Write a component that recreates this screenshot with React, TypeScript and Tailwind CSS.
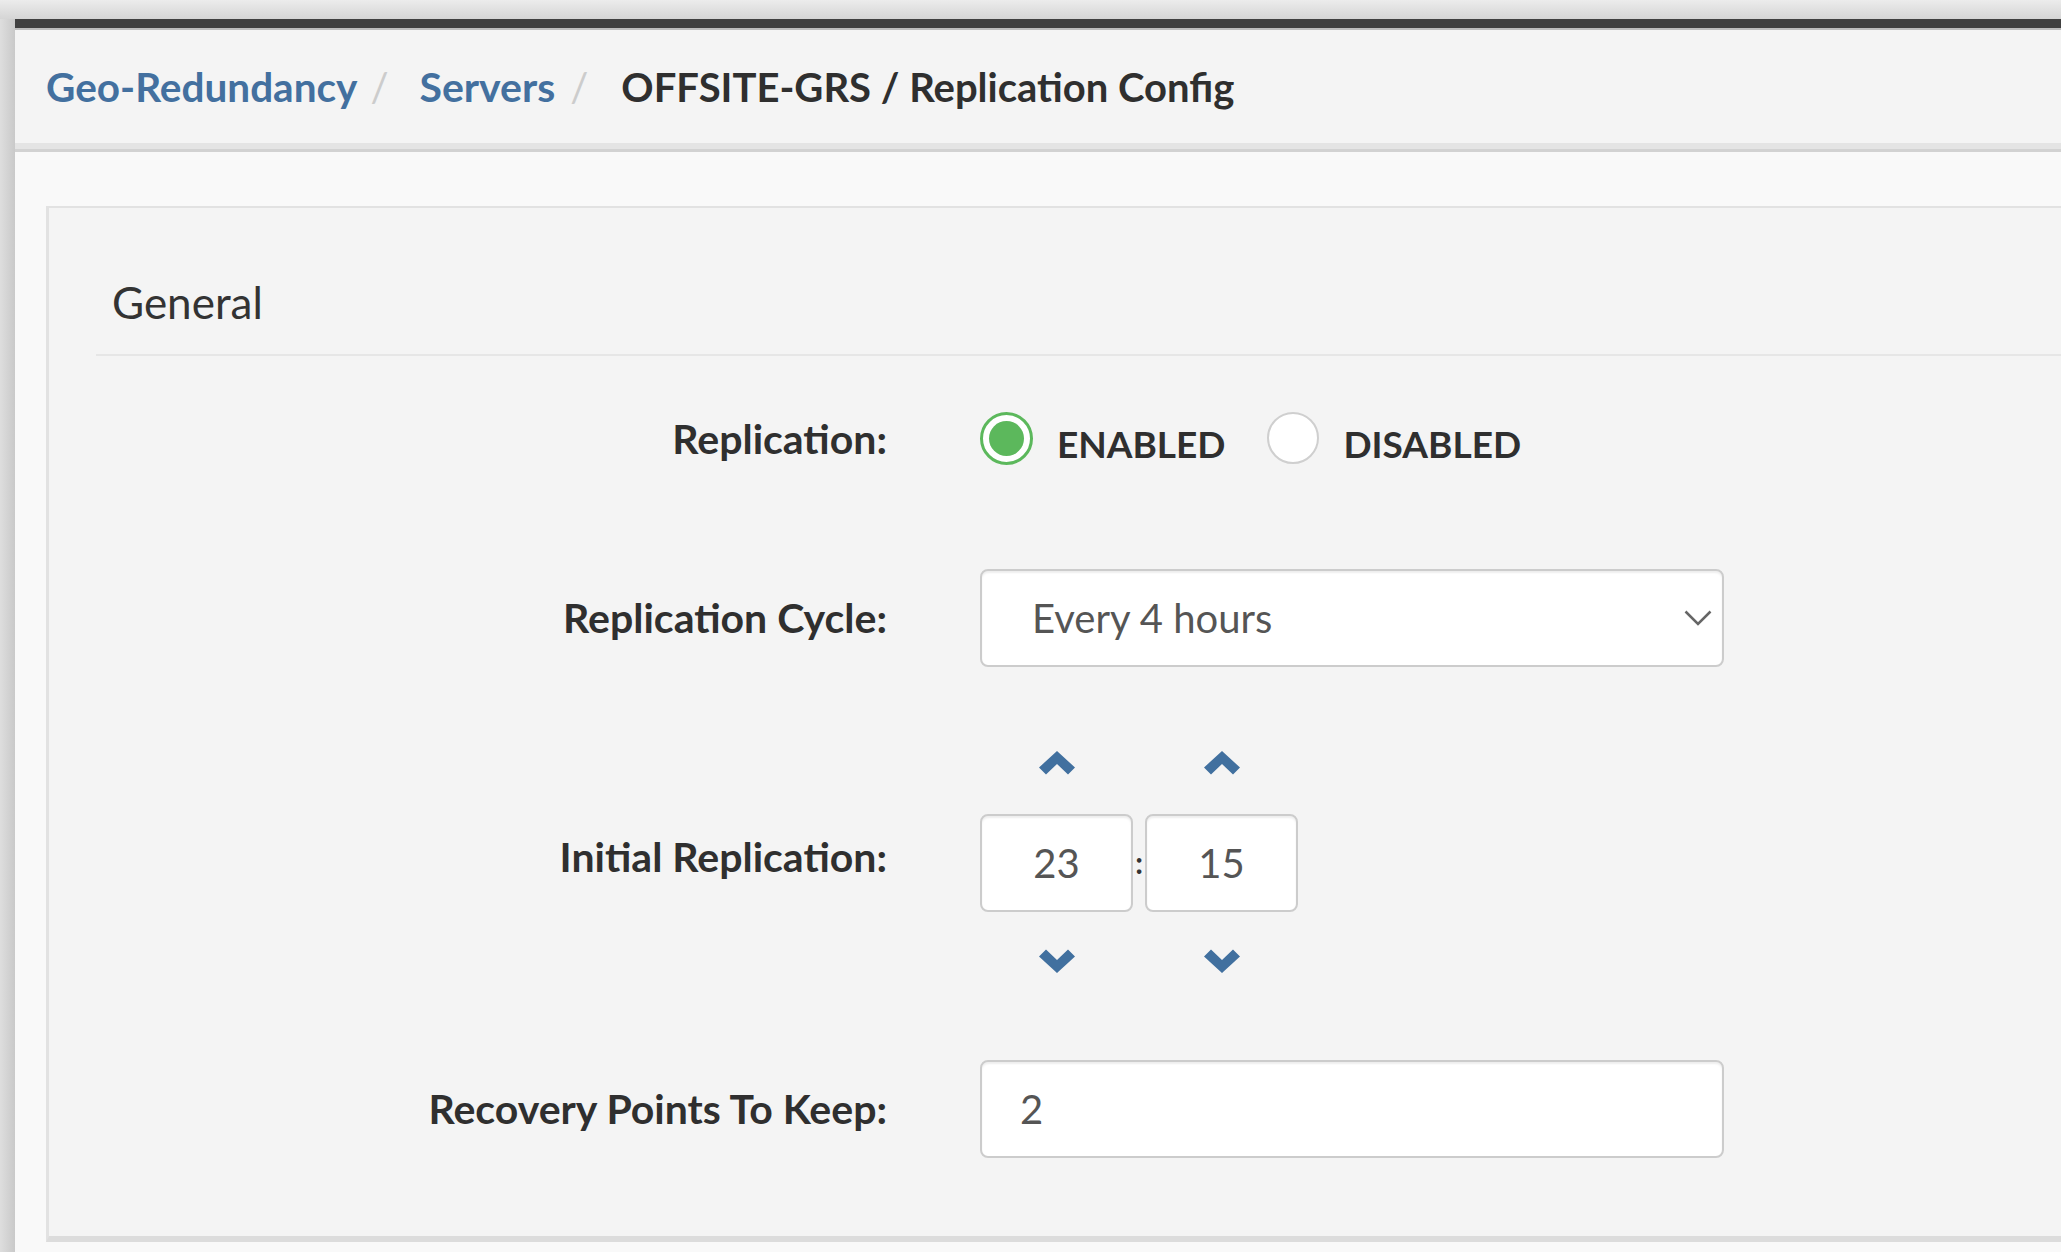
import React from "react";

const font = "font-['Lato','Liberation_Sans',sans-serif]";

function ChevronUp() {
  return (
    <svg width="36" height="24" viewBox="0 0 36 24" className="block">
      <path d="M18 0 L36 16.5 L29 23.5 L18 13 L7 23.5 L0 16.5 Z" fill="#41709f" />
    </svg>
  );
}

function ChevronDown() {
  return (
    <svg width="36" height="24" viewBox="0 0 36 24" className="block">
      <path d="M18 24 L36 7.5 L29 0.5 L18 11 L7 0.5 L0 7.5 Z" fill="#41709f" />
    </svg>
  );
}

function Radio({ checked, label }: { checked?: boolean; label: string }) {
  return (
    <label className="flex items-start">
      {checked ? (
        <span className="flex h-[53px] w-[53px] items-center justify-center rounded-full border-[3px] border-[#5cb85c] bg-white">
          <span className="h-[35px] w-[35px] rounded-full bg-[#5cb85c]" />
        </span>
      ) : (
        <span className="h-[52px] w-[52px] rounded-full border-2 border-[#cfcfcf] bg-white" />
      )}
      <span className="ml-[24px] mt-[10px] text-[37px] font-bold leading-[43px] text-[#2f2f2f]">
        {label}
      </span>
    </label>
  );
}

function Row({
  label,
  lift,
  children,
}: {
  label: string;
  lift?: boolean;
  children: React.ReactNode;
}) {
  return (
    <div className="grid grid-cols-[838px_744px] items-center gap-x-[93px]">
      <div
        className={`text-right text-[41px] font-bold leading-[48px] text-[#2f2f2f] ${lift ? "pb-[10px]" : ""}`}
      >
        {label}
      </div>
      <div>{children}</div>
    </div>
  );
}

const boxClass =
  "h-[98px] rounded-[8px] border-2 border-[#cccccc] bg-white shadow-[inset_0_2px_2px_rgba(0,0,0,0.07)]";

function TimeColumn({ value }: { value: string }) {
  return (
    <div className="flex flex-col items-center">
      <button className="flex h-[24px] items-center">
        <ChevronUp />
      </button>
      <div className={`${boxClass} mt-[39px] flex w-[153px] items-center justify-center text-[40px] text-[#555555]`}>
        {value}
      </div>
      <button className="mt-[37px] flex h-[24px] items-center">
        <ChevronDown />
      </button>
    </div>
  );
}

export default function App() {
  return (
    <div className={`${font} flex h-screen w-full flex-col overflow-hidden bg-[#e2e2e2]`}>
      {/* desktop shadow above the window */}
      <div className="h-[19px] shrink-0 bg-gradient-to-b from-[#ececec] to-[#d5d5d5]" />
      <div className="flex flex-1">
        <div className="w-[15px] shrink-0 bg-gradient-to-r from-[#dedede] to-[#c9c9c9]" />
        <div className="flex flex-1 flex-col">
          <div className="h-[9px] bg-[#404040]" />
          <div className="h-[2px] bg-[#bdbdbd]" />

          {/* breadcrumb */}
          <nav className="flex h-[113px] items-center bg-[#f4f4f4] pl-[31px] text-[40px] font-bold leading-[48px]">
            <a className="text-[40.5px] text-[#43709f]">Geo-Redundancy</a>
            <span className="ml-[13px] mr-[31px] font-normal text-[#cccccc]">/</span>
            <a className="text-[41px] text-[#43709f]">Servers</a>
            <span className="ml-[15px] mr-[33px] font-normal text-[#cccccc]">/</span>
            <span className="text-[#2f2f2f]">OFFSITE-GRS / Replication Config</span>
          </nav>
          <div className="h-[6px] bg-[#e4e4e4]" />
          <div className="h-[3px] bg-[#d2d2d2]" />

          <div className="flex-1 bg-[#f9f9f9] pl-[31px] pt-[54px]">
            <section className="border-b-[6px] border-l-[3px] border-t-2 border-[#e2e2e2] border-b-[#dcdcdc] bg-[#f4f4f4]">
              <div className="ml-[47px] pt-[68px]">
                <h2 className="pl-[16px] text-[44px] leading-[52px] text-[#333333]">General</h2>
                <div className="mt-[26px] h-[2px] bg-[#e6e6e6]" />
              </div>

              <div className="flex flex-col pb-[78px] pt-[56px]">
                <Row label="Replication:">
                  <div className="flex items-start gap-[42px]">
                    <Radio checked label="ENABLED" />
                    <Radio label="DISABLED" />
                  </div>
                </Row>

                <div className="mt-[104px]">
                  <Row label="Replication Cycle:">
                    <div className={`${boxClass} flex items-center justify-between pl-[50px] pr-[10px] text-[40px] text-[#555555]`}>
                      <span>Every 4 hours</span>
                      <svg width="28" height="16" viewBox="0 0 28 16">
                        <polyline points="1.5,1.5 14,14 26.5,1.5" fill="none" stroke="#666666" strokeWidth="2.5" />
                      </svg>
                    </div>
                  </Row>
                </div>

                <div className="mt-[84px]">
                  <Row label="Initial Replication:" lift>
                    <div className="flex items-center">
                      <TimeColumn value="23" />
                      <span className="w-[12px] text-center text-[30px] font-bold leading-none text-[#333333]">:</span>
                      <TimeColumn value="15" />
                    </div>
                  </Row>
                </div>

                <div className="mt-[87px]">
                  <Row label="Recovery Points To Keep:">
                    <div className={`${boxClass} flex items-center pl-[38px] text-[40px] text-[#555555]`}>2</div>
                  </Row>
                </div>
              </div>
            </section>
          </div>
        </div>
      </div>
    </div>
  );
}
